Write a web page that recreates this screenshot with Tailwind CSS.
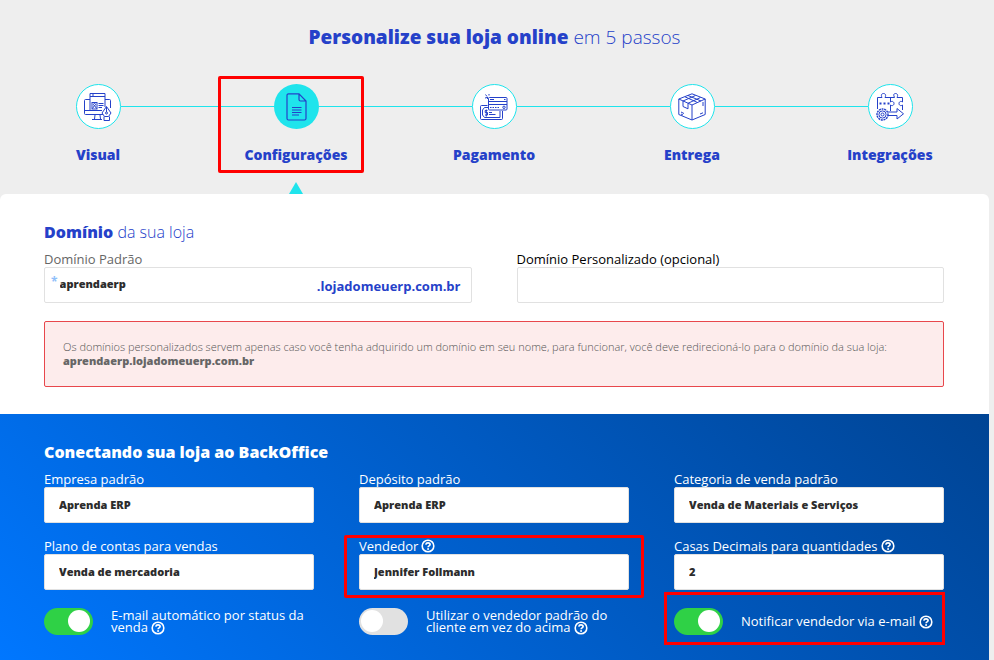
<!DOCTYPE html>
<html lang="pt-BR">
<head>
<meta charset="utf-8">
<meta name="viewport" content="width=device-width, initial-scale=1">
<title>Personalize sua loja online</title>
<script src="https://cdn.jsdelivr.net/npm/@tailwindcss/browser@4"></script>
</head>
<body class="min-h-screen flex flex-col bg-[#eeeeee] pr-[5px] font-['Open_Sans',sans-serif] text-[13px] leading-4 text-white">
<svg class="hidden" aria-hidden="true">
  <symbol id="help" viewBox="0 0 14 14">
    <circle cx="7" cy="7" r="5.8" fill="none" stroke="currentColor" stroke-width="1.6"/>
    <path d="M4.800 5.600C5 4.400 5.900 3.900 7 3.900c1.200 0 2.100.7 2.100 1.700 0 1.300-2 1.300-2 2.600" fill="none" stroke="currentColor" stroke-width="1.700"/>
    <rect x="6.200" y="9.200" width="1.800" height="1.600" fill="currentColor"/>
  </symbol>
</svg>

<header>
  <h1 class="pt-[23px] text-center text-[19px] leading-7 font-light text-[#2541c9]"><b class="font-extrabold">Personalize sua loja online</b> em 5 passos</h1>
  <nav class="pt-[33px]" aria-label="Passos">
    <ol class="-ml-px grid grid-cols-5 text-center text-sm leading-5 font-extrabold text-[#2541c9]">
      <li>
        <a href="#visual" class="block">
          <span class="flex items-center">
            <span class="flex-1"></span>
            <span class="size-[45px] rounded-full border border-[#1fe4ec] bg-white flex items-center justify-center">
              <svg class="size-7" viewBox="0 0 28 28" fill="none" stroke="#2541c9" stroke-width="1">
                <path d="M6 6.500H1.500a1 1 0 0 0-1 1v13a1 1 0 0 0 1 1H19M21 6.500h4.500a1 1 0 0 1 1 1V15M.5 17.500H18M11 22l-.5 4M16 22l.5 4M8 26.500h10"/>
                <path d="M6 17V.5h15V14M6 3.500h15M8 2h2"/>
                <rect x="8" y="9.500" width="5" height="6.500"/><path d="m8.500 15.500 2-3 2 3"/><circle cx="10.500" cy="11.500" r="1"/><path d="M14.500 10.500h5M14.500 12.500h5M14.500 14.500H18"/>
                <path d="M22.500 13.500 18 20l2.500 3.500h4L27 20zM22.500 14v5M20 23.500v4h5.500v-4" fill="#fff"/><circle cx="22.500" cy="20" r="1"/>
              </svg>
            </span>
            <span class="h-px flex-1 bg-[#1fe4ec]"></span>
          </span>
          <span class="mt-4 block">Visual</span>
        </a>
      </li>
      <li class="relative">
        <a href="#configuracoes" class="block" aria-current="step">
          <span class="flex items-center">
            <span class="h-px flex-1 bg-[#1fe4ec]"></span>
            <span class="size-[45px] rounded-full bg-[#1fe4ec] flex items-center justify-center">
              <svg class="h-7 w-[21px]" viewBox="0 0 21 28" fill="none" stroke="#2541c9" stroke-width="1.200">
                <path d="M13 .8H2.500A1.500 1.500 0 0 0 1 2.300v23.200A1.500 1.500 0 0 0 2.500 27h16a1.500 1.500 0 0 0 1.500-1.500V8zM13 .8V6.500A1.500 1.500 0 0 0 14.500 8H20"/>
                <path d="M6 14.500h9.500M6 17h9.500M6 19.500h9.500M6 22h7" stroke-width="1"/>
              </svg>
            </span>
            <span class="h-px flex-1 bg-[#1fe4ec]"></span>
          </span>
          <span class="mt-4 block">Configurações</span>
        </a>
        <svg class="mx-auto mt-[17px] block h-3 w-[14px]" viewBox="0 0 14 12" fill="#1fe4ec" aria-hidden="true"><path d="M7 0l7 12H0z"/></svg>
        <span class="pointer-events-none absolute -top-2 left-[21px] right-[31px] bottom-[21px] rounded-xs border-3 border-[#ff0000]"></span>
      </li>
      <li>
        <a href="#pagamento" class="block">
          <span class="flex items-center">
            <span class="h-px flex-1 bg-[#1fe4ec]"></span>
            <span class="size-[45px] rounded-full border border-[#1fe4ec] bg-white flex items-center justify-center">
              <svg class="size-7" viewBox="0 0 28 28" fill="none" stroke="#2541c9" stroke-width="1">
                <path d="M7.500 12.500h-6a1 1 0 0 0-1 1v12a1 1 0 0 0 1 1h20a1 1 0 0 0 1-1V18M8 14.500H4.500L2.500 17v5l2 2.500H20V18"/>
                <rect x="8.500" y="4.500" width="18.500" height="12.500" rx="1"/><path d="M9 8.500h18M10 6.500h4M24 6.500h1.500M9 11.500h18"/>
                <path d="M10 14.500h9" stroke-dasharray="1.500 1"/><circle cx="24" cy="14.300" r="1.200"/>
                <path d="M7.500 17.500H5.200v2h2.300v2.500H5M6.300 16.500v7M9 19.500h3M9 21.500h6.500M5.500 1.500l1.500 2M9 1v1.500M5 5l2-.5M7.500 6V4"/>
              </svg>
            </span>
            <span class="h-px flex-1 bg-[#1fe4ec]"></span>
          </span>
          <span class="mt-4 block">Pagamento</span>
        </a>
      </li>
      <li>
        <a href="#entrega" class="block">
          <span class="flex items-center">
            <span class="h-px flex-1 bg-[#1fe4ec]"></span>
            <span class="size-[45px] rounded-full border border-[#1fe4ec] bg-white flex items-center justify-center">
              <svg class="size-7" viewBox="0 0 28 28" fill="none" stroke="#2541c9" stroke-width="1" stroke-linejoin="round">
                <path d="M14 .8.800 6v15.500L14 27l13.200-5.500V6zM.8 6 14 12l13.200-6M14 12v15"/>
                <path d="M10 2.500 23 8M7 3.800 19.500 9.500M5 8v5.500l5 2.300v-5.500L22.500 4.500M5 8l12.500-5.500M3 19l3 1.500M3 21l2 1M22 21l3-1.200M25 9v4"/>
              </svg>
            </span>
            <span class="h-px flex-1 bg-[#1fe4ec]"></span>
          </span>
          <span class="mt-4 block">Entrega</span>
        </a>
      </li>
      <li>
        <a href="#integracoes" class="block">
          <span class="flex items-center">
            <span class="h-px flex-1 bg-[#1fe4ec]"></span>
            <span class="size-[45px] rounded-full border border-[#1fe4ec] bg-white flex items-center justify-center">
              <svg class="size-7" viewBox="0 0 28 28" fill="none" stroke="#2541c9" stroke-width="1">
                <path d="M1.500 16V4.500H6C4.500 1.500 6 .5 7.500.5S10.500 1.500 9 4.500h9.500C17 1.500 18 .5 19.500.5s3 1 1.500 4h5.500V9c-2-1.500-3.500 0-3.500 1.500s1.500 3 3.500 1.500v5"/>
                <path d="M14.500 4.500V9c2-1.500 3.500 0 3.500 1.500s-1.500 3-3.500 1.500v6"/>
                <path d="M3.500 10.500h2M7.500 10.500h2M11.500 10.500h2" stroke-width="2"/>
                <path d="M12 19h9v-3.500l6.500 5.300L21 26v-3.500h-9"/>
                <circle cx="6.500" cy="21.500" r="5.500" stroke-width="1.400" stroke-dasharray="2 .7"/><circle cx="6.500" cy="21.500" r="3.600"/><circle cx="6.500" cy="21.500" r="1.500"/>
              </svg>
            </span>
            <span class="flex-1"></span>
          </span>
          <span class="mt-4 block">Integrações</span>
        </a>
      </li>
    </ol>
  </nav>
</header>

<main class="flex flex-1 flex-col overflow-hidden rounded-t-md">
  <section class="bg-white pt-[26px] pr-[45px] pb-[27px] pl-11">
    <h2 class="text-base leading-6 font-light text-[#2541c9]"><b class="font-extrabold">Domínio</b> da sua loja</h2>
    <div class="mt-[7px] grid grid-cols-2 gap-[45px]">
      <div>
        <label for="dominio" class="block text-[#666666]">Domínio Padrão</label>
        <div class="flex h-9 items-center rounded-xs border border-[#e1e1e1] pr-2.5 pl-1.5 focus-within:border-[#2541c9]">
          <span class="self-start pt-1.5 text-xs font-bold text-[#8fc0fa]" aria-hidden="true">*</span>
          <input id="dominio" type="text" required value="aprendaerp" class="min-w-0 flex-1 pb-0.5 pl-0.5 text-[11px] font-extrabold text-[#2c2c2c] outline-none">
          <span class="pt-0.5 text-[13px] font-bold text-[#2541c9]">.lojadomeuerp.com.br</span>
        </div>
      </div>
      <div>
        <label for="personalizado" class="block text-black">Domínio Personalizado (opcional)</label>
        <input id="personalizado" type="text" class="block h-9 w-full rounded-xs border border-[#e1e1e1] px-3.5 pb-0.5 text-[11px] font-extrabold text-[#2c2c2c]">
      </div>
    </div>
    <p class="mt-[18px] rounded-xs border border-[#e8474c] bg-[#fdecec] px-[18px] pt-[18px] pb-[18px] text-[11px] leading-[14px] font-light text-[#555555]">Os domínios personalizados servem apenas caso você tenha adquirido um domínio em seu nome, para funcionar, você deve redirecioná-lo para o domínio da sua loja:<br><b class="font-extrabold text-[#666666]">aprendaerp.lojadomeuerp.com.br</b></p>
  </section>

  <section class="flex-1 bg-linear-45 from-[#0077ff] to-[#004494] pt-[26px] pr-[45px] pb-6 pl-11">
    <h2 class="text-base leading-6 font-extrabold">Conectando sua loja ao BackOffice</h2>
    <div class="mt-[7px] grid grid-cols-3 gap-x-[45px] gap-y-[15px]">
      <div>
        <label for="empresa" class="block">Empresa padrão</label>
        <input id="empresa" type="text" value="Aprenda ERP" class="block h-9 w-full rounded-xs border border-[#e1e1e1] bg-white px-3.5 pb-0.5 text-[11px] font-extrabold text-[#2c2c2c]">
      </div>
      <div>
        <label for="deposito" class="block">Depósito padrão</label>
        <input id="deposito" type="text" value="Aprenda ERP" class="block h-9 w-full rounded-xs border border-[#e1e1e1] bg-white px-3.5 pb-0.5 text-[11px] font-extrabold text-[#2c2c2c]">
      </div>
      <div>
        <label for="categoria" class="block">Categoria de venda padrão</label>
        <input id="categoria" type="text" value="Venda de Materiais e Serviços" class="block h-9 w-full rounded-xs border border-[#e1e1e1] bg-white px-3.5 pb-0.5 text-[11px] font-extrabold text-[#2c2c2c]">
      </div>
      <div>
        <label for="plano" class="block">Plano de contas para vendas</label>
        <input id="plano" type="text" value="Venda de mercadoria" class="block h-9 w-full rounded-xs border border-[#e1e1e1] bg-white px-3.5 pb-0.5 text-[11px] font-extrabold text-[#2c2c2c]">
      </div>
      <div class="relative">
        <label for="vendedor" class="flex items-center gap-[3px]">Vendedor <svg class="size-[14px]"><use href="#help"/></svg></label>
        <input id="vendedor" type="text" value="Jennifer Follmann" class="block h-9 w-full rounded-xs border border-[#e1e1e1] bg-white px-3.5 pb-0.5 text-[11px] font-extrabold text-[#2c2c2c]">
        <span class="pointer-events-none absolute -inset-x-[15px] -top-[3px] -bottom-2 rounded-xs border-3 border-[#ff0000]"></span>
      </div>
      <div>
        <label for="casas" class="flex items-center gap-[3px]">Casas Decimais para quantidades <svg class="size-[14px]"><use href="#help"/></svg></label>
        <input id="casas" type="text" value="2" class="block h-9 w-full rounded-xs border border-[#e1e1e1] bg-white px-3.5 pb-0.5 text-[11px] font-extrabold text-[#2c2c2c]">
      </div>
    </div>
    <div class="mt-[18px] grid grid-cols-3 gap-x-[45px] leading-3">
      <div class="flex items-center gap-[18px]">
        <input id="status" type="checkbox" checked class="relative h-[27px] w-[49px] shrink-0 appearance-none rounded-full bg-[#e1e1e1] before:absolute before:top-0.5 before:left-0.5 before:size-[22px] before:rounded-full before:bg-white checked:bg-[#2fd146] checked:before:left-6">
        <label for="status" class="pb-0.5">E-mail automático por status da venda <svg class="-my-1 inline size-[14px] align-[1px]"><use href="#help"/></svg></label>
      </div>
      <div class="flex items-center gap-[18px]">
        <input id="utilizar" type="checkbox" class="relative h-[27px] w-[49px] shrink-0 appearance-none rounded-full bg-[#e1e1e1] before:absolute before:top-0.5 before:left-0.5 before:size-[22px] before:rounded-full before:bg-white checked:bg-[#2fd146] checked:before:left-6">
        <label for="utilizar" class="pb-0.5">Utilizar o vendedor padrão do cliente em vez do acima <svg class="-my-1 inline size-[14px] align-[1px]"><use href="#help"/></svg></label>
      </div>
      <div class="relative flex items-center gap-[18px]">
        <input id="notificar" type="checkbox" checked class="relative h-[27px] w-[49px] shrink-0 appearance-none rounded-full bg-[#e1e1e1] before:absolute before:top-0.5 before:left-0.5 before:size-[22px] before:rounded-full before:bg-white checked:bg-[#2fd146] checked:before:left-6">
        <label for="notificar" class="pb-0.5">Notificar vendedor via e-mail <svg class="-my-1 inline size-[14px] align-[1px]"><use href="#help"/></svg></label>
        <span class="pointer-events-none absolute -top-4 -right-px -bottom-2.5 -left-2.5 border-3 border-[#ff0000]"></span>
      </div>
    </div>
  </section>
</main>
</body>
</html>
